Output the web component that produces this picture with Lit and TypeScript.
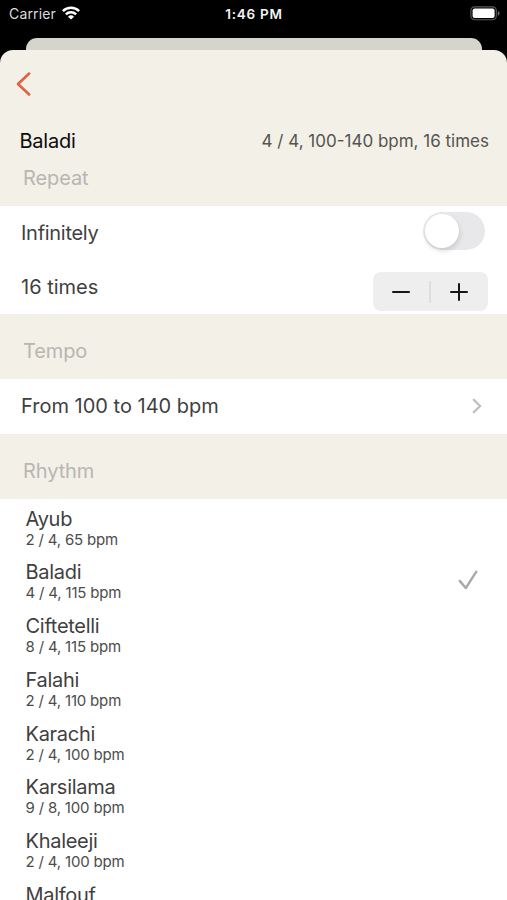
import { LitElement, html, css } from "lit";
import { customElement, state } from "lit/decorators.js";

interface Rhythm {
  name: string;
  info?: string;
}

const RHYTHMS: Rhythm[] = [
  { name: "Ayub", info: "2 / 4, 65 bpm" },
  { name: "Baladi", info: "4 / 4, 115 bpm" },
  { name: "Ciftetelli", info: "8 / 4, 115 bpm" },
  { name: "Falahi", info: "2 / 4, 110 bpm" },
  { name: "Karachi", info: "2 / 4, 100 bpm" },
  { name: "Karsilama", info: "9 / 8, 100 bpm" },
  { name: "Khaleeji", info: "2 / 4, 100 bpm" },
  { name: "Malfouf" },
];

@customElement("status-bar")
class StatusBar extends LitElement {
  static styles = css`
    :host {
      display: grid;
      grid-template-columns: 1fr auto 1fr;
      align-items: center;
      height: 28px;
      padding: 0 7px 0 9px;
      color: #fff;
      font-size: 14px;
    }
    .carrier { display: flex; align-items: center; gap: 6px; color: #dcdcdc; letter-spacing: 0.15px; }
    .time { font-weight: 600; font-size: 13.5px; letter-spacing: 0.75px; margin-right: 1px; color: #f4f4f4; }
    .battery { justify-self: end; margin-top: -2px; }
    svg { display: block; }
    .wifi { margin-top: -2px; }
  `;
  render() {
    return html`
      <div class="carrier">
        <span>Carrier</span>
        <svg class="wifi" width="18" height="14" viewBox="0 0 18 14" fill="none" stroke="#fff" stroke-width="2.5">
          <path d="M0.9 5.1a11.5 11.5 0 0 1 16.2 0" />
          <path d="M3.9 8.4a7.2 7.2 0 0 1 10.2 0" />
          <path d="M9 13.6L6 10.7a4 4 0 0 1 6 0z" fill="#fff" stroke="none" />
        </svg>
      </div>
      <span class="time">1:46 PM</span>
      <svg class="battery" width="30" height="15" viewBox="0 0 30 15">
        <rect x="0.9" y="0.9" width="25.4" height="12.8" rx="3.6" fill="none" stroke="#5c5c5c" stroke-width="1.1" />
        <rect x="2.6" y="2.6" width="22" height="9.4" rx="2" fill="#fff" />
        <path d="M27.8 5v4.8q1.8-.8 1.8-2.4T27.8 5z" fill="#6a6a6a" />
      </svg>
    `;
  }
}

@customElement("rhythm-row")
class RhythmRow extends LitElement {
  static properties = {
    rhythm: { attribute: false },
    selected: { type: Boolean },
  };
  declare rhythm: Rhythm;
  declare selected: boolean;

  static styles = css`
    :host {
      display: flex;
      align-items: flex-start;
      justify-content: space-between;
      height: 53.75px;
      padding: 7.3px 29px 0 25.5px;
      box-sizing: border-box;
    }
    .name { font-size: 20px; line-height: 24px; color: #3f3f3f; letter-spacing: -0.28px; }
    .info { font-size: 15px; line-height: 17px; color: #4c4c4c; letter-spacing: -0.18px; }
    svg { display: block; margin-top: 10px; }
  `;
  render() {
    return html`
      <div>
        <div class="name">${this.rhythm.name}</div>
        ${this.rhythm.info ? html`<div class="info">${this.rhythm.info}</div>` : null}
      </div>
      ${this.selected
        ? html`<svg width="20" height="20" viewBox="0 0 20 20" fill="none" stroke="#a9a9a9" stroke-width="2.4" stroke-linecap="round" stroke-linejoin="round">
            <path d="M1.7 10.9L7.8 18L18.2 1.8" />
          </svg>`
        : null}
    `;
  }
}

@customElement("app-root")
class AppRoot extends LitElement {
  @state() private selected = "Baladi";

  static styles = css`
    :host {
      display: flex;
      flex-direction: column;
      height: 900px;
      overflow: hidden;
      background: #000;
      font-family: Inter, "Liberation Sans", sans-serif;
      color: #3f3f3f;
      font-size: 20px;
      line-height: 24px;
    }
    status-bar { flex: none; }
    .behind {
      flex: none;
      height: 12.3px;
      margin: 9.7px 25px 0 25.5px;
      background: #d6d5cd;
      border-radius: 11px 11px 0 0;
    }
    .sheet {
      flex: 1;
      min-height: 0;
      overflow: hidden;
      background: #f3f0e8;
      border-radius: 13px 13px 0 0;
    }
    .nav { height: 68px; padding: 21px 0 0 16px; box-sizing: border-box; }
    .summary {
      display: flex;
      align-items: center;
      justify-content: space-between;
      height: 46px;
      padding: 0 18px 0 19.5px;
    }
    .title { color: #0c0c0c; letter-spacing: -0.25px; }
    .detail { font-size: 17px; color: #55544f; }
    .section {
      display: flex;
      align-items: flex-end;
      box-sizing: border-box;
      height: 65.3px;
      padding: 0 0 16px 23px;
      color: #b8b6b0;
      letter-spacing: -0.1px;
    }
    .section.first { height: 42px; }
    .section.rhythm { height: 65.7px; }
    .row {
      display: flex;
      align-items: center;
      justify-content: space-between;
      box-sizing: border-box;
      height: 53.8px;
      padding: 0 19px 0 21px;
      background: #fff;
    }
    .row.tempo { height: 54.7px; }
    .infinite { letter-spacing: -0.28px; }
    .toggle {
      display: flex;
      width: 62px;
      height: 38px;
      margin: 0 3px 3px 0;
      padding: 2px;
      box-sizing: border-box;
      border-radius: 19px;
      background: #e8e8ea;
    }
    .knob {
      width: 34px;
      height: 34px;
      border-radius: 50%;
      background: #fff;
      box-shadow: 1px 3px 5px rgba(0, 0, 0, 0.13);
    }
    .stepper {
      display: grid;
      grid-template-columns: 56px 1.5px 57px;
      align-items: center;
      justify-items: center;
      width: 115px;
      height: 38.5px;
      margin-top: 10px;
      border-radius: 8px;
      background: #eeeeef;
    }
    .bar { width: 1.5px; height: 22px; background: #dededf; }
    .chevron { margin-right: 6px; }
    svg { display: block; }
    .list { background: #fff; }
  `;

  render() {
    return html`
      <status-bar></status-bar>
      <div class="behind"></div>
      <div class="sheet">
        <div class="nav">
          <svg width="16" height="26" viewBox="0 0 16 26" fill="none" stroke="#df6444" stroke-width="2.7" stroke-linecap="round" stroke-linejoin="round">
            <path d="M13.2 2.6L2 12.9L13.2 23.4" />
          </svg>
        </div>
        <div class="summary">
          <span class="title">Baladi</span>
          <span class="detail">4 / 4, 100-140 bpm, 16 times</span>
        </div>
        <div class="section first"><span>Repeat</span></div>
        <div class="row">
          <span class="infinite">Infinitely</span>
          <div class="toggle"><div class="knob"></div></div>
        </div>
        <div class="row">
          <span>16 times</span>
          <div class="stepper">
            <svg width="20" height="20" viewBox="0 0 20 20" stroke="#161616" stroke-width="2" stroke-linecap="round"><path d="M2 10H18" /></svg>
            <div class="bar"></div>
            <svg width="20" height="20" viewBox="0 0 20 20" stroke="#161616" stroke-width="2" stroke-linecap="round"><path d="M2 10H18M10 2V18" /></svg>
          </div>
        </div>
        <div class="section"><span>Tempo</span></div>
        <div class="row tempo">
          <span>From 100 to 140 bpm</span>
          <svg class="chevron" width="10" height="16" viewBox="0 0 10 16" fill="none" stroke="#c0c0c0" stroke-width="2.3" stroke-linecap="round" stroke-linejoin="round">
            <path d="M1.8 1.8L8.2 8L1.8 14.2" />
          </svg>
        </div>
        <div class="section rhythm"><span>Rhythm</span></div>
        <div class="list">
          ${RHYTHMS.map(
            (r) => html`<rhythm-row
              .rhythm=${r}
              ?selected=${r.name === this.selected}
              @click=${() => (this.selected = r.name)}
            ></rhythm-row>`
          )}
        </div>
      </div>
    `;
  }
}
